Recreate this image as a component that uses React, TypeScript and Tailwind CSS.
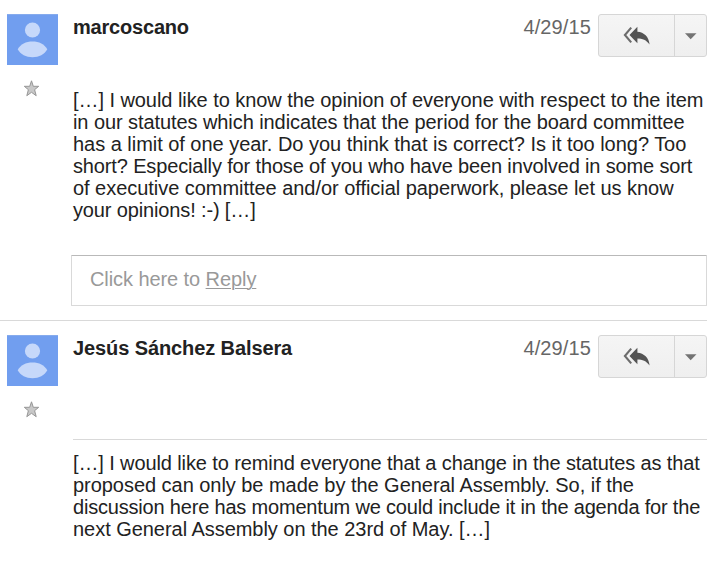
const FIRST = [
  { text: '[…] I would like to know the opinion of everyone with respect to the item', tracking: 'tracking-[-0.06px]' },
  { text: 'in our statutes which indicates that the period for the board committee', tracking: 'tracking-[-0.077px]' },
  { text: 'has a limit of one year. Do you think that is correct? Is it too long? Too', tracking: 'tracking-[-0.03px]' },
  { text: 'short? Especially for those of you who have been involved in some sort', tracking: 'tracking-[-0.143px]' },
  { text: 'of executive committee and/or official paperwork, please let us know', tracking: 'tracking-[-0.04px]' },
  { text: 'your opinions! :-) […]', tracking: 'tracking-[-0.14px]' },
];

const SECOND = [
  { text: '[…] I would like to remind everyone that a change in the statutes as that', tracking: 'tracking-[-0.11px]' },
  { text: 'proposed can only be made by the General Assembly. So, if the', tracking: 'tracking-[-0.04px]' },
  { text: 'discussion here has momentum we could include it in the agenda for the', tracking: 'tracking-[-0.19px]' },
  { text: 'next General Assembly on the 23rd of May. […]', tracking: 'tracking-[-0.04px]' },
];

function Avatar() {
  return (
    <svg className="block h-[51px] w-[51px]" viewBox="0 0 51 51" aria-hidden="true">
      <rect width="51" height="51" fill="#719eef" />
      <rect width="51" height="1" fill="#86abed" />
      <circle cx="25.5" cy="16" r="7.6" fill="#c6d8fa" />
      <path
        d="M10.7 35.2C13.5 30 19 27.4 25.5 27.4S37.5 30 40.3 35.2C37.5 40.3 32 43.2 25.5 43.2S13.5 40.3 10.7 35.2Z"
        fill="#c6d8fa"
      />
    </svg>
  );
}

function Star() {
  return (
    <svg className="mt-[13px] ml-[15px] block h-[20px] w-[20px]" viewBox="0 0 20 20" aria-hidden="true">
      <path
        d="M9.5 2.8L11.3 8.3H16.7L12.6 11.7L14.2 17.7L9.5 14.3L4.8 17.7L6.4 11.7L2.3 8.3H7.7Z"
        fill="#c8c8c8"
        stroke="#969696"
        strokeWidth="1"
      />
    </svg>
  );
}

function Actions() {
  return (
    <div className="flex h-[43px] w-[109px] rounded-[3px] border border-[#d6d6d6] bg-linear-to-b from-[#f5f5f5] to-[#efefef]">
      <button className="w-[76px] border-r border-[#d6d6d6]" aria-label="Reply all">
        <svg className="block h-[41px] w-[75px]" viewBox="0 0 75 41">
          <path d="M32.2 12.6L25.9 20L32.2 27.4" fill="none" stroke="#6c6c6c" strokeWidth="2.1" />
          <path
            d="M38.4 11.8V16.8C45 17.3 49.8 21.5 50.6 29.5C47.3 25 43.500 23.500 38.400 23.500V28.300L30.500 20Z"
            fill="#545454"
          />
        </svg>
      </button>
      <button className="w-[31px]" aria-label="More actions">
        <svg className="block h-[41px] w-[31px]" viewBox="0 0 31 41">
          <path d="M10 18.3H21.5L15.7 24.3Z" fill="#737373" />
        </svg>
      </button>
    </div>
  );
}

function Header({ name, tracking }: { name: string; tracking: string }) {
  return (
    <div className="flex h-[43px] items-start">
      <div className={`mt-[2px] flex-1 pl-[2px] font-bold leading-[22px] ${tracking}`}>{name}</div>
      <div className="mt-[2px] mr-[7px] leading-[22px] tracking-[0.12px] text-[#666]">4/29/15</div>
      <Actions />
    </div>
  );
}

function Lines({ lines }: { lines: { text: string; tracking: string }[] }) {
  return (
    <div className="pl-[2px]">
      {lines.map((line) => (
        <div key={line.text} className={`h-[22px] leading-[22px] whitespace-nowrap ${line.tracking}`}>
          {line.text}
        </div>
      ))}
    </div>
  );
}

export default function App() {
  return (
    <main className="h-[572px] w-[718px] overflow-hidden bg-white font-['Liberation_Sans',Arial,sans-serif] text-[20px] text-[#222]">
      <article className="flex h-[321px] w-[707px] border-b border-[#d9d9d9] pt-[14px] pl-[7px]">
        <div className="w-[64px]">
          <Avatar />
          <Star />
        </div>
        <div className="w-[636px]">
          <Header name="marcoscano" tracking="tracking-[-0.2px]" />
          <div className="mt-[32px]">
            <Lines lines={FIRST} />
          </div>
          <div className="mt-[34px] h-[51px] rounded-[1px] border border-[#d9d9d9] border-t-[#b9b9b9] pt-[12px] pl-[18px] leading-[22px] tracking-[-0.08px] text-[#999]">
            Click here to <span className="underline decoration-1 underline-offset-2">Reply</span>
          </div>
        </div>
      </article>
      <article className="flex w-[707px] pt-[14px] pl-[7px]">
        <div className="w-[64px]">
          <Avatar />
          <Star />
        </div>
        <div className="w-[636px]">
          <Header name="Jesús Sánchez Balsera" tracking="tracking-[-0.1px]" />
          <div className="mt-[61px] ml-[2px] border-t border-[#d9d9d9]" />
          <div className="mt-[12px]">
            <Lines lines={SECOND} />
          </div>
        </div>
      </article>
    </main>
  );
}
